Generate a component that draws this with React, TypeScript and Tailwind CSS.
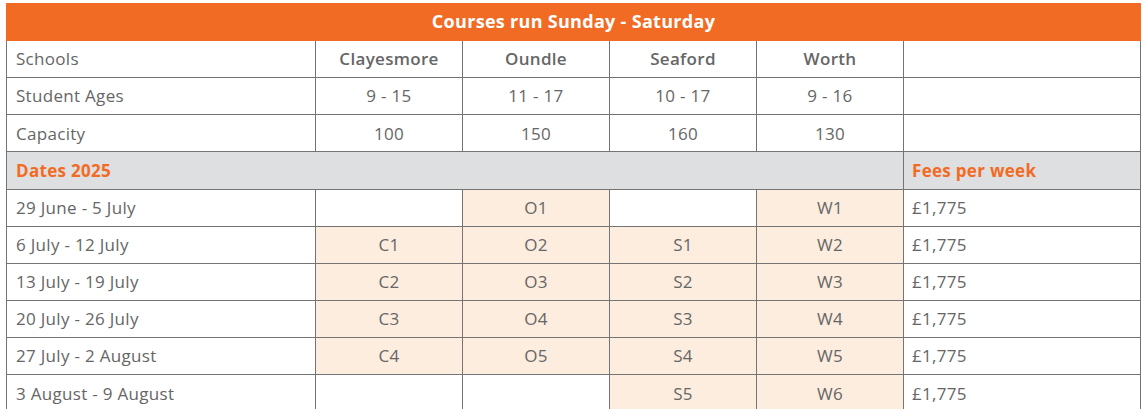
import React from 'react';

const schools = ['Clayesmore', 'Oundle', 'Seaford', 'Worth'];

const info = [
  { label: 'Student Ages', values: ['9 - 15', '11 - 17', '10 - 17', '9 - 16'] },
  { label: 'Capacity', values: ['100', '150', '160', '130'] },
];

const dates = [
  { label: '29 June - 5 July', codes: ['', 'O1', '', 'W1'] },
  { label: '6 July - 12 July', codes: ['C1', 'O2', 'S1', 'W2'] },
  { label: '13 July - 19 July', codes: ['C2', 'O3', 'S2', 'W3'] },
  { label: '20 July - 26 July', codes: ['C3', 'O4', 'S3', 'W4'] },
  { label: '27 July - 2 August', codes: ['C4', 'O5', 'S4', 'W5'] },
  { label: '3 August - 9 August', codes: ['', '', 'S5', 'W6'] },
];

const cell = 'border border-[#747474] h-[37.15px] p-0 align-middle';

const App: React.FC = () => {
  return (
    <div className="bg-white min-h-screen pl-[6px] pt-[3px] font-['Open_Sans',sans-serif] text-[#666]">
      <div className="w-[1135px]">
        {/* Title bar */}
        <div className="bg-[#f26b24] h-[37.5px] flex items-center justify-center text-white font-bold text-[18px] tracking-[0.3px]">
          Courses run Sunday - Saturday
        </div>

        <table className="w-[1135px] table-fixed border-collapse text-[17px] tracking-[0.3px]">
          <colgroup>
            <col className="w-[309px]" />
            <col className="w-[147px]" />
            <col className="w-[147px]" />
            <col className="w-[147px]" />
            <col className="w-[147px]" />
            <col />
          </colgroup>
          <tbody>
            <tr>
              <td className={`${cell} border-t-0 pl-[9px]`}>Schools</td>
              {schools.map(s => (
                <td key={s} className={`${cell} border-t-0 text-center font-semibold`}>{s}</td>
              ))}
              <td className={`${cell} border-t-0`} />
            </tr>
            {info.map(row => (
              <tr key={row.label}>
                <td className={`${cell} pl-[9px]`}>{row.label}</td>
                {row.values.map((v, i) => (
                  <td key={i} className={`${cell} text-center`}>{v}</td>
                ))}
                <td className={cell} />
              </tr>
            ))}
            <tr className="bg-[#dedfe1]">
              <td colSpan={5} className={`${cell} pl-[9px] text-[#f26b24] font-bold`}>Dates 2025</td>
              <td className={`${cell} border-l-0 pl-[8px] text-[#f26b24] font-bold`}>Fees per week</td>
            </tr>
            {dates.map(row => (
              <tr key={row.label}>
                <td className={`${cell} pl-[9px]`}>{row.label}</td>
                {row.codes.map((c, i) => (
                  <td key={i} className={`${cell} text-center ${c ? 'bg-[#fdeddf]' : ''}`}>{c}</td>
                ))}
                <td className={`${cell} pl-[8px]`}>£1,775</td>
              </tr>
            ))}
          </tbody>
        </table>
      </div>
    </div>
  );
};

export default App;
